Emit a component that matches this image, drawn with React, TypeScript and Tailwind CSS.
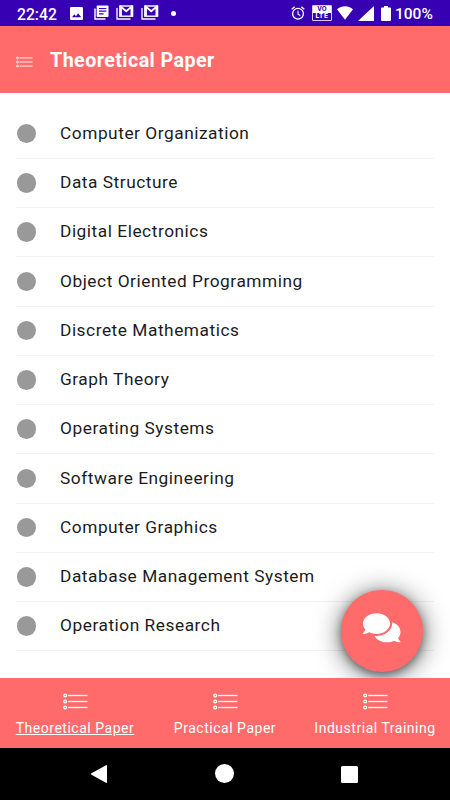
import React, { useState } from 'react';
import { FaComments } from 'react-icons/fa';

const PAPERS = [
    'Computer Organization',
    'Data Structure',
    'Digital Electronics',
    'Object Oriented Programming',
    'Discrete Mathematics',
    'Graph Theory',
    'Operating Systems',
    'Software Engineering',
    'Computer Graphics',
    'Database Management System',
    'Operation Research',
];

const TABS = ['Theoretical Paper', 'Practical Paper', 'Industrial Training'];

const ListIcon: React.FC<{ className?: string }> = ({ className }) => (
    <svg viewBox="0 0 25 17" className={className} fill="none" stroke="currentColor">
        {[2.5, 8.5, 14.5].map((y) => (
            <g key={y}>
                <circle cx="2.2" cy={y} r="1.4" strokeWidth="1.3" />
                <path d={`M5.2 ${y}H24.5`} strokeWidth="1.3" />
            </g>
        ))}
    </svg>
);

const MailIcon: React.FC = () => (
    <svg viewBox="0 0 18 15" className="w-[18px] h-[15px]" fill="none" stroke="currentColor">
        <path d="M1 3v11h13.5" strokeWidth="1.3" />
        <rect x="3.8" y="1" width="12.8" height="10.2" strokeWidth="1.4" />
        <path d="M5 11V1.8l5.2 4.4 5.2-4.4V11" strokeWidth="1.8" />
    </svg>
);

const StatusBar: React.FC = () => (
    <div className="h-[26px] bg-[#3700b3] text-white flex items-center justify-between pl-[17px] pr-[17px] font-medium">
        <div className="flex items-center">
            <span className="w-[53px] text-[15.700px] leading-none pt-[3px]">22:42</span>
            <svg viewBox="0 0 13 13" className="w-[13px] h-[13px] mt-px">
                <rect width="13" height="13" rx="1.3" fill="currentColor" />
                <path d="M2 10.3l2.3-3 1.6 1.9 2.3-2.9 3 4z" fill="#3700b3" />
            </svg>
            <svg viewBox="0 0 15 15" className="w-[15px] h-[15px] ml-[10.500px]">
                <path d="M1 3.5V14h10.5" fill="none" stroke="currentColor" strokeWidth="1.4" />
                <rect x="2.7" y="0.5" width="11.8" height="11.5" rx="0.8" fill="currentColor" />
                <path d="M5 3.5h7.3M5 6.2h7.3M5 8.9h4.6" stroke="#3700b3" strokeWidth="1.2" />
            </svg>
            <div className="ml-[7.500px] flex gap-[6.500px]">
                <MailIcon />
                <MailIcon />
            </div>
            <span className="w-[5px] h-[5px] ml-[12px] mt-px rounded-full bg-white" />
        </div>
        <div className="flex items-center">
            <svg viewBox="0 0 14 14" className="w-[14px] h-[14px] -ml-px" fill="none" stroke="currentColor">
                <circle cx="7" cy="7.7" r="5.4" strokeWidth="1.3" />
                <path d="M7 4.8v3.3l2.3 1.4" strokeWidth="1.1" />
                <path d="M0.7 3.3L3.7 0.8M13.3 3.3L10.3 0.8" strokeWidth="1.3" />
            </svg>
            <span className="w-[20px] h-[16px] ml-[7px] rounded-[1px] border border-[#d8ccf2] bg-white flex flex-col text-center font-bold text-[7px] leading-[7px]">
                <span className="h-[7px] text-[#3700b3]">VO</span>
                <span className="h-[7px] bg-[#3700b3] tracking-[0.5px]">LTE</span>
            </span>
            <svg viewBox="0 0 16 14" className="w-[16px] h-[14px] ml-[5px]" fill="currentColor">
                <path d="M0 3.2C4.6-.7 11.4-.7 16 3.2L8 13.8z" />
            </svg>
            <svg viewBox="0 0 16 15" className="w-[16px] h-[15px] ml-[5px]" fill="currentColor">
                <path d="M0 15L16 0v15z" />
            </svg>
            <svg viewBox="0 0 10 15" className="w-[10px] h-[15px] ml-[7px]" fill="currentColor">
                <path d="M3 0h4v1.5h2a1 1 0 011 1V14a1 1 0 01-1 1H1a1 1 0 01-1-1V2.500a1 1 0 011-1h2z" />
            </svg>
            <span className="ml-[4px] w-[38px] whitespace-nowrap text-[15.500px] leading-none pt-[3px]">100%</span>
        </div>
    </div>
);

const SystemNav: React.FC = () => (
    <div className="h-[52px] bg-black text-white flex items-center pl-[91px] pb-px">
        <svg viewBox="0 0 16 18" className="w-[16px] h-[18px] mt-px" fill="currentColor">
            <path d="M0.500 8.3L15 0.200q1-.4 1 .6v16.400q0 1-1 .6L0.500 9.700q-1-.7 0-1.400z" />
        </svg>
        <span className="w-[19px] h-[19px] ml-[108px] rounded-full bg-white" />
        <span className="w-[17px] h-[17px] ml-[106.500px] mt-[2px] rounded-[1.5px] bg-white" />
    </div>
);

export default function App() {
    const [activeTab, setActiveTab] = useState(0);

    return (
        <div className="w-[450px] h-[800px] overflow-hidden flex flex-col bg-white font-[Roboto,sans-serif]">
            <StatusBar />
            <header className="h-[67px] bg-[#ff6b6b] text-white flex items-center pl-[16px]">
                <ListIcon className="w-[17px] h-[12px] mt-[4px]" />
                <h1 className="ml-[17px] mt-[2px] text-[19.700px] font-bold tracking-[0.43px]">{TABS[activeTab]}</h1>
            </header>

            <main className="relative h-[585px] overflow-hidden px-4 pt-[16.500px]">
                <ul>
                    {PAPERS.map((paper) => (
                        <li key={paper} className="h-[49.250px] border-b border-[#f2f2f2] flex items-center">
                            <span className="w-[19.500px] h-[19.500px] ml-[0.5px] rounded-full bg-[#999999]" />
                            <span className="ml-[24px] pt-[0.500px] text-[17.300px] tracking-[0.54px] text-[#1c1c1c]">{paper}</span>
                        </li>
                    ))}
                </ul>
                <button className="absolute left-[341px] top-[496.500px] w-[82px] h-[82px] rounded-full bg-[#ff6b6b] text-white flex items-center justify-center shadow-[0_3px_8px_rgba(0,0,0,0.4),0_3px_24px_2px_rgba(0,0,0,0.5)]">
                    <FaComments className="w-[37.500px] h-[33.500px] -mt-[5px]" />
                </button>
            </main>

            <nav className="h-[70px] bg-[#ff6b6b] text-white grid grid-cols-3">
                {TABS.map((tab, index) => (
                    <button
                        key={tab}
                        onClick={() => setActiveTab(index)}
                        className="flex flex-col items-center pt-[15px]"
                    >
                        <ListIcon className="w-[25px] h-[17px]" />
                        <span
                            className={`mt-[8px] text-[14px] leading-[20px] tracking-[0.52px] whitespace-nowrap ${index === activeTab ? 'underline' : ''}`}
                        >
                            {tab}
                        </span>
                    </button>
                ))}
            </nav>
            <SystemNav />
        </div>
    );
}
